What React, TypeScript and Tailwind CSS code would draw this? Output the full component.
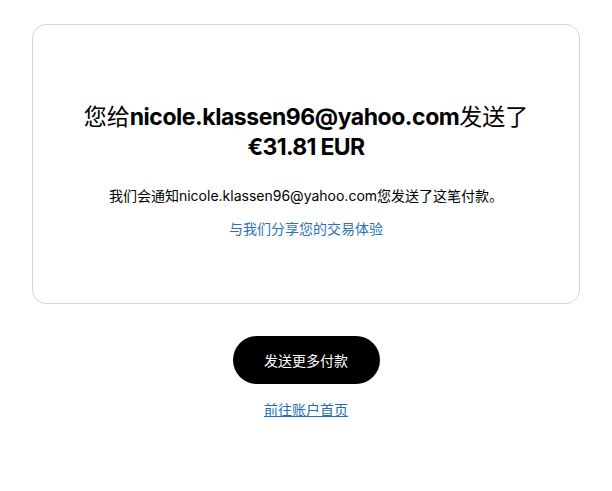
import React from "react";

const cjk = `font-['Inter','Noto_Sans_CJK_SC',sans-serif]`;

export default function App() {
  return (
    <div className={`min-h-[491px] w-[612px] bg-white ${cjk} text-black`}>
      <div className="px-8 pt-6">
        <div className="flex h-[280px] flex-col items-center justify-center rounded-[14px] border border-[#d4d4d4] px-4 pt-3">
          <h1 className="text-center text-[23px] leading-[30px] font-normal">
            您给<span className="font-bold tracking-[-0.02em]">nicole.klassen96@yahoo.com</span>发送了
            <br />
            <span className="font-bold tracking-[-0.03em]">€31.81 EUR</span>
          </h1>
          <p className="mt-[24px] text-[14px] leading-5">
            我们会通知nicole.klassen96@yahoo.com您发送了这笔付款。
          </p>
          <a href="#" className="mt-[13px] text-[14px] leading-5 text-[#2a73b8]">
            与我们分享您的交易体验
          </a>
        </div>
      </div>
      <div className="mt-[32px] flex flex-col items-center">
        <button className="h-12 w-[147px] rounded-full bg-black text-[14px] text-white">
          发送更多付款
        </button>
        <a href="#" className="mt-[16px] text-[14px] leading-5 text-[#1e6fb5] underline">
          前往账户首页
        </a>
      </div>
    </div>
  );
}
